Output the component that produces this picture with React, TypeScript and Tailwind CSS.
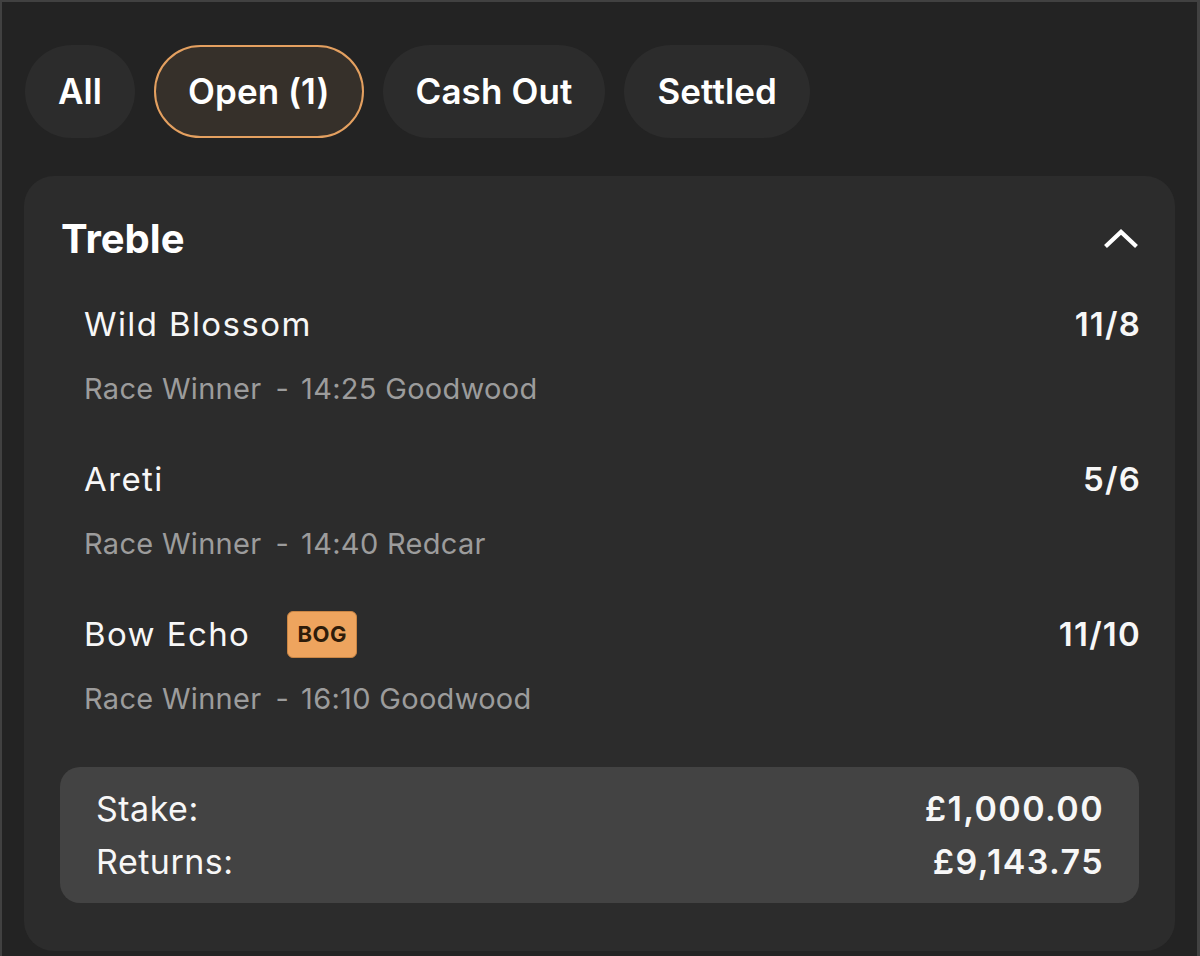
import React from "react";

type Leg = { name: string; odds: string; market: string; event: string; bog?: boolean };

const legs: Leg[] = [
  { name: "Wild Blossom", odds: "11/8", market: "Race Winner", event: "14:25 Goodwood" },
  { name: "Areti", odds: "5/6", market: "Race Winner", event: "14:40 Redcar" },
  { name: "Bow Echo", odds: "11/10", market: "Race Winner", event: "16:10 Goodwood", bog: true },
];

const tabs = [
  { label: "All", active: false },
  { label: "Open (1)", active: true },
  { label: "Cash Out", active: false },
  { label: "Settled", active: false },
];

function ChevronUp() {
  return (
    <svg width="36" height="20" viewBox="0 0 36 20" fill="none">
      <polyline points="2.5,17.5 18,3 33.5,17.5" stroke="#ffffff" strokeWidth="4.2" strokeLinejoin="miter" />
    </svg>
  );
}

function LegRow({ leg }: { leg: Leg }) {
  return (
    <div className="pl-[24px] flex flex-col">
      <div className="flex items-center justify-between h-[40px]">
        <div className="flex items-center">
          <span className="text-[33px] leading-[40px] text-[#f7f7f7] font-normal tracking-[1.4px]">{leg.name}</span>
          {leg.bog && (
            <span className="ml-[37px] h-[47px] w-[70px] flex items-center justify-center rounded-[6px] bg-[#eea45e] border border-[#c98544] text-[22px] font-bold text-[#2e1c0a] tracking-[0.5px]">
              BOG
            </span>
          )}
        </div>
        <span className="-mr-[2px] text-[33px] leading-[40px] font-semibold text-[#f7f7f7] tracking-[1.2px]">{leg.odds}</span>
      </div>
      <div className="mt-[26px] h-[37px] flex items-center text-[29px] leading-[37px] text-[#9c9c9c] tracking-[0.3px]">
        <span>{leg.market}</span>
        <span className="ml-[14px]">-</span>
        <span className="ml-[12px]">{leg.event}</span>
      </div>
    </div>
  );
}

export default function App() {
  return (
    <div
      className="w-[1200px] h-[956px] bg-[#232323] border-t-2 border-l-2 border-r-[3px] border-[#414141] overflow-hidden"
      style={{ fontFamily: "Inter, 'Noto Sans', 'Liberation Sans', sans-serif" }}
    >
      <div className="pt-[43px] pl-[23px] flex gap-[19px]">
        {tabs.map((t) =>
          t.active ? (
            <div
              key={t.label}
              className="h-[93px] px-[32px] rounded-full border-[2.5px] border-[#e4a060] bg-[#36302a] flex items-center text-[35px] font-semibold text-white tracking-[0.05px]"
            >
              {t.label}
            </div>
          ) : (
            <div
              key={t.label}
              className="h-[93px] px-[33px] rounded-full bg-[#2c2c2c] flex items-center text-[35px] font-semibold text-white tracking-[0.1px]"
            >
              {t.label}
            </div>
          )
        )}
      </div>

      <div className="mt-[38px] ml-[22px] w-[1151px] rounded-[30px] bg-[#2c2c2c] px-[36px] pt-[33px] pb-[48px]">
        <div className="h-[60px] flex items-center justify-between">
          <span className="ml-[1px] text-[40px] font-bold text-white leading-[48px]">Treble</span>
          <ChevronUp />
        </div>

        <div className="mt-[35px] flex flex-col gap-[52px]">
          {legs.map((l) => (
            <LegRow key={l.name} leg={l} />
          ))}
        </div>

        <div className="mt-[50px] rounded-[20px] bg-[#434343] py-[15px] pl-[36px] pr-[35px] text-[34px] leading-[53px] text-[#f7f7f7]">
          <div className="flex justify-between">
            <span className="tracking-[0.5px]">Stake:</span>
            <span className="font-semibold tracking-[1.4px]">£1,000.00</span>
          </div>
          <div className="flex justify-between">
            <span className="tracking-[0.5px]">Returns:</span>
            <span className="font-semibold tracking-[1.4px]">£9,143.75</span>
          </div>
        </div>
      </div>
    </div>
  );
}
